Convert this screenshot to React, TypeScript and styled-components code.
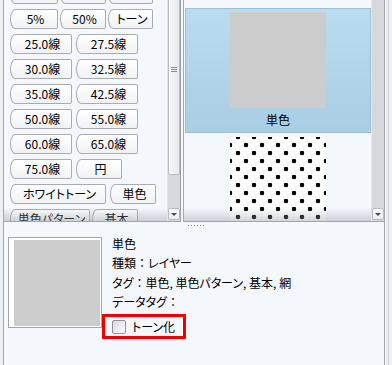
import React from 'react';
import styled, { createGlobalStyle } from 'styled-components';

const GlobalStyle = createGlobalStyle`
  html, body {
    margin: 0;
    padding: 0;
    background: #eef0f3;
  }
  body {
    font-family: "Noto Sans CJK JP", "Noto Sans", sans-serif;
    font-size: 12px;
    color: #000;
  }
`;

const Window = styled.div`
  width: 392px;
  height: 365px;
  display: flex;
  overflow: hidden;
  background: #eef0f3;
`;

const Frame = styled.div`
  margin-left: 3px;
  width: 380px;
  flex: none;
  display: flex;
  flex-direction: column;
  background: #f4f7fb;
  border-left: 1px solid #a3a6ab;
  border-right: 1px solid #a3a6ab;
`;

const EdgeStrip = styled.div`
  flex: 1;
  margin-left: 3px;
  border-left: 1px solid #c9ccd1;
  background: #f1f2f5;
`;

const Panels = styled.div`
  display: flex;
  height: 222px;
  flex: none;
`;

const Panel = styled.div<{ $width?: number }>`
  display: flex;
  box-sizing: border-box;
  height: 100%;
  ${p => (p.$width ? `width: ${p.$width}px; flex: none;` : 'flex: 1;')}
  border-bottom: 1px solid #a2a5aa;
`;

const LeftPanel = styled(Panel)`
  border-right: 1px solid #999ca1;
  margin-right: 2px;
`;

const RightPanel = styled(Panel)`
  border-left: 1px solid #a3a6ab;
`;

const ListArea = styled.div`
  position: relative;
  flex: 1;
  overflow: hidden;
`;

const BottomFade = styled.div`
  position: absolute;
  left: 0;
  right: 0;
  bottom: 0;
  height: 13px;
  pointer-events: none;
  background: linear-gradient(rgba(255, 255, 255, 0), rgba(150, 156, 164, 0.42));
`;

/* tone chips on the left */

const ChipStack = styled.div`
  display: flex;
  flex-direction: column;
  gap: 5px;
  padding-left: 6px;
  margin-top: -16px;
`;

const ChipRow = styled.div<{ $gap: number }>`
  display: flex;
  gap: ${p => p.$gap}px;
`;

const Chip = styled.button<{ $w: number }>`
  box-sizing: border-box;
  width: ${p => p.$w}px;
  height: 20px;
  flex: none;
  display: flex;
  align-items: center;
  justify-content: center;
  padding: 0 0 0 3px;
  margin: 0;
  border: 1px solid #aaacaf;
  border-radius: 5px 2px 2px 5px / 10px 2px 2px 10px;
  background: linear-gradient(#ffffff, #f1f2f4);
  font-family: inherit;
  font-size: 12px;
  font-feature-settings: "palt";
  line-height: 1;
  color: #000;
  white-space: nowrap;
`;

/* scrollbars */

const ScrollBar = styled.div`
  width: 13px;
  flex: none;
  box-sizing: border-box;
  display: flex;
  flex-direction: column;
  border-left: 1px solid #e3e5e9;
  background: #d6d8dc;
`;

const Track = styled.div`
  flex: 1;
  overflow: hidden;
`;

const Thumb = styled.div<{ $top: number; $h: number }>`
  box-sizing: border-box;
  margin-top: ${p => p.$top}px;
  height: ${p => p.$h}px;
  display: flex;
  align-items: center;
  justify-content: center;
  border: 1px solid #b8bbc0;
  border-radius: 2px;
  background: linear-gradient(to right, #f6f7f9, #e7e9ec);
`;

const ThumbGrip = styled.span`
  width: 6px;
  height: 5px;
  background: repeating-linear-gradient(#8a8d92 0 1px, transparent 1px 2px);
`;

const ArrowButton = styled.div`
  box-sizing: border-box;
  height: 12px;
  margin-bottom: 1px;
  display: flex;
  align-items: center;
  justify-content: center;
  border: 1px solid #b9bcc0;
  border-radius: 2px;
  background: linear-gradient(#fbfbfc, #e9ebee);
`;

const DownTriangle = styled.span`
  width: 0;
  height: 0;
  border-left: 3px solid transparent;
  border-right: 3px solid transparent;
  border-top: 3px solid #4a4d52;
`;

/* material tiles on the right */

const TileStack = styled.div`
  display: flex;
  flex-direction: column;
  padding: 8px 0 0 1px;
`;

const Tile = styled.div<{ $selected?: boolean }>`
  box-sizing: border-box;
  height: 125px;
  flex: none;
  display: flex;
  flex-direction: column;
  align-items: center;
  padding-top: 3px;
  border: 1px solid ${p => (p.$selected ? '#9fc1d8' : 'transparent')};
  background: ${p =>
    p.$selected ? 'linear-gradient(#badcef, #a9cde3)' : 'transparent'};
`;

const Swatch = styled.div<{ $dots?: boolean }>`
  width: 96px;
  height: 96px;
  flex: none;
  background-color: ${p => (p.$dots ? '#ffffff' : '#cccccc')};
  ${p =>
    p.$dots &&
    `
    background-image:
      radial-gradient(circle, #000 2px, transparent 2.6px),
      radial-gradient(circle, #000 2px, transparent 2.6px);
    background-size: 16px 16px;
    background-position: 0px -8px, -8px 0px;
  `}
`;

const TileLabel = styled.div`
  margin-top: 4px;
  line-height: 16px;
  font-size: 12px;
`;

/* details */

const Details = styled.div`
  flex: 1;
  display: flex;
  flex-direction: column;
`;

const SplitGrip = styled.div`
  align-self: center;
  width: 17px;
  height: 1px;
  margin-top: 3px;
  margin-left: 4px;
  background: repeating-linear-gradient(to right, #8d9096 0 1px, transparent 1px 3px);
`;

const InfoRow = styled.div`
  display: flex;
  align-items: flex-start;
  gap: 10px;
  padding: 11px 0 0 4px;
`;

const Preview = styled.div`
  box-sizing: border-box;
  width: 94px;
  height: 91px;
  flex: none;
  display: flex;
  padding: 2px 1px 1px 5px;
  border: 1px solid #a4a6a9;
  background: #ffffff;
`;

const PreviewFill = styled.div`
  flex: 1;
  background: #cccccc;
`;

const InfoText = styled.div`
  display: flex;
  flex-direction: column;
  align-items: flex-start;
  margin-top: -3px;
  font-size: 12px;
  font-feature-settings: "palt";
  line-height: 19.3px;
  white-space: nowrap;
`;

const Colon = styled.span`
  font-feature-settings: normal;
`;

const Highlight = styled.label`
  box-sizing: border-box;
  width: 84px;
  height: 25px;
  margin: 3px 0 0 -10px;
  display: flex;
  align-items: center;
  gap: 6px;
  padding-left: 7px;
  border: 3px solid #f20000;
  line-height: 1;
`;

const CheckBox = styled.span`
  box-sizing: border-box;
  width: 14px;
  height: 14px;
  flex: none;
  border: 1px solid #8f9398;
  border-radius: 2px;
  background: linear-gradient(135deg, #d9dde2, #fbfbfc);
`;

type ChipDef = { label: string; w: number };

// first row is scrolled mostly out of view, only its lower edge shows
const chipRows: { gap: number; chips: ChipDef[] }[] = [
  { gap: 2, chips: [{ label: '', w: 48 }, { label: '', w: 46 }, { label: '', w: 45 }] },
  { gap: 2, chips: [{ label: '5%', w: 48 }, { label: '50%', w: 46 }, { label: 'トーン', w: 45 }] },
  { gap: 4, chips: [{ label: '25.0線', w: 62 }, { label: '27.5線', w: 62 }] },
  { gap: 4, chips: [{ label: '30.0線', w: 62 }, { label: '32.5線', w: 62 }] },
  { gap: 4, chips: [{ label: '35.0線', w: 62 }, { label: '42.5線', w: 62 }] },
  { gap: 4, chips: [{ label: '50.0線', w: 62 }, { label: '55.0線', w: 62 }] },
  { gap: 4, chips: [{ label: '60.0線', w: 62 }, { label: '65.0線', w: 62 }] },
  { gap: 4, chips: [{ label: '75.0線', w: 62 }, { label: '円', w: 46 }] },
  { gap: 4, chips: [{ label: 'ホワイトトーン', w: 96 }, { label: '単色', w: 46 }] },
  { gap: 2, chips: [{ label: '単色パターン', w: 80 }, { label: '基本', w: 46 }] },
];

const App = () => (
  <>
    <GlobalStyle />
    <Window>
      <Frame>
        <Panels>
          <LeftPanel $width={177}>
            <ListArea>
              <ChipStack>
                {chipRows.map((row, i) => (
                  <ChipRow key={i} $gap={row.gap}>
                    {row.chips.map((c, j) => (
                      <Chip key={j} $w={c.w}>
                        {c.label}
                      </Chip>
                    ))}
                  </ChipRow>
                ))}
              </ChipStack>
              <BottomFade />
            </ListArea>
            <ScrollBar>
              <Track>
                <Thumb $top={-37} $h={212}>
                  <ThumbGrip />
                </Thumb>
              </Track>
              <ArrowButton>
                <DownTriangle />
              </ArrowButton>
            </ScrollBar>
          </LeftPanel>
          <RightPanel>
            <ListArea>
              <TileStack>
                <Tile $selected>
                  <Swatch />
                  <TileLabel>単色</TileLabel>
                </Tile>
                <Tile>
                  <Swatch $dots />
                </Tile>
              </TileStack>
              <BottomFade />
            </ListArea>
            <ScrollBar>
              <Track />
              <ArrowButton>
                <DownTriangle />
              </ArrowButton>
            </ScrollBar>
          </RightPanel>
        </Panels>
        <Details>
          <SplitGrip />
          <InfoRow>
            <Preview>
              <PreviewFill />
            </Preview>
            <InfoText>
              <span>単色</span>
              <span>
                種類<Colon>：</Colon>レイヤー
              </span>
              <span>
                タグ<Colon>：</Colon>単色, 単色パターン, 基本, 網
              </span>
              <span>
                データタグ<Colon>：</Colon>
              </span>
              <Highlight>
                <CheckBox />
                <span>トーン化</span>
              </Highlight>
            </InfoText>
          </InfoRow>
        </Details>
      </Frame>
      <EdgeStrip />
    </Window>
  </>
);

export default App;
